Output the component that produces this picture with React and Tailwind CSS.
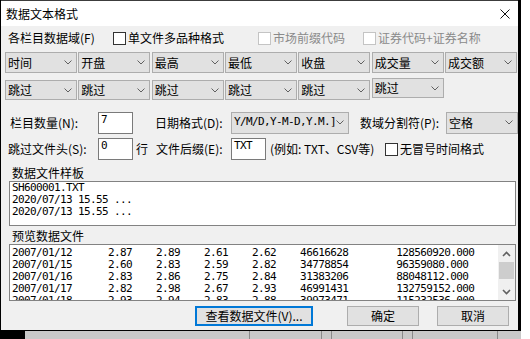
import React from "react";

const mono = "font-['DejaVu_Sans_Mono',monospace] text-[11px] tracking-[-0.62px]";

const rows = [
  ["2007/01/12", "2.87", "2.89", "2.61", "2.62", "46616628", "128560920.000"],
  ["2007/01/15", "2.60", "2.83", "2.59", "2.82", "34778854", "96359080.000"],
  ["2007/01/16", "2.83", "2.86", "2.75", "2.84", "31383206", "88048112.000"],
  ["2007/01/17", "2.82", "2.98", "2.67", "2.93", "46991431", "132759152.000"],
  ["2007/01/18", "2.93", "2.94", "2.83", "2.88", "39973471", "115232536.000"],
];

const fmt = (r) =>
  r[0].padEnd(16) +
  r.slice(1, 5).map((v) => v.padEnd(8)).join("") +
  r[5].padEnd(16) +
  r[6];

const Chevron = () => (
  <svg width="8" height="5" viewBox="0 0 8 5" className="shrink-0">
    <path d="M0.5 0.5 L4 4 L7.5 0.5" stroke="#606060" fill="none" strokeWidth="1" />
  </svg>
);

const Combo = ({ label, className = "w-[72px] h-[21px]", mono: isMono }) => (
  <div
    className={`${className} flex items-center justify-between border border-[#adadad] bg-[#e1e1e1] pl-[2px] pr-[4px] overflow-hidden`}
  >
    <span className={`whitespace-nowrap ${isMono ? mono : "leading-[16px]"}`}>{label}</span>
    <Chevron />
  </div>
);

const Checkbox = ({ label, disabled }) => (
  <div className="flex items-center">
    <div
      className={`w-[13px] h-[13px] bg-white border ${
        disabled ? "border-[#c4c4c4]" : "border-[#333333]"
      }`}
    />
    <span className={`ml-[2px] leading-[16px] ${disabled ? "text-[#8a8a8a]" : ""}`}>{label}</span>
  </div>
);

const Edit = ({ value, className = "w-[35px]" }) => (
  <div className={`${className} h-[22px] bg-white border border-[#7a7a7a] pl-[2px] pt-[1px]`}>
    <span className={`${mono} leading-[12px] block`}>{value}</span>
  </div>
);

const Button = ({ children, className, focused }) => (
  <div
    className={`${className} h-[20px] flex items-center justify-center bg-[#e1e1e1] ${
      focused ? "border-2 border-[#0078d7]" : "border border-[#adadad]"
    }`}
  >
    {children}
  </div>
);

const App = () => {
  const top = ["时间", "开盘", "最高", "最低", "收盘", "成交量", "成交额"];

  return (
    <div className="w-[530px] h-[339px] bg-white flex overflow-hidden font-['Noto_Sans_CJK_SC',sans-serif] text-[12px] text-black">
      <div className="w-[521px] flex flex-col">
        <div className="h-[331px] flex flex-col border-l border-r-[3px] border-b border-black bg-[#f0f0f0]">
          {/* title bar */}
          <div className="h-[26px] bg-white border-t border-[#3c3c3c] flex items-center justify-between pl-[5px] pr-[8px]">
            <span className="leading-[16px]">数据文本格式</span>
            <svg width="10" height="10" viewBox="0 0 10 10">
              <path d="M0.5 0.5 L9.5 9.5 M9.5 0.5 L0.5 9.5" stroke="#111" strokeWidth="1" />
            </svg>
          </div>

          {/* row 1 */}
          <div className="h-[18px] mt-[3px] flex items-center pl-[7px]">
            <span className="w-[105px] leading-[16px]">各栏目数据域(F)</span>
            <div className="w-[145px]">
              <Checkbox label="单文件多品种格式" />
            </div>
            <div className="w-[105px]">
              <Checkbox label="市场前缀代码" disabled />
            </div>
            <Checkbox label="证券代码+证券名称" disabled />
          </div>

          {/* row 2 */}
          <div className="mt-[5px] flex gap-[1.33px] pl-[4px]">
            {top.map((t) => (
              <Combo key={t} label={t} />
            ))}
          </div>

          {/* row 3 */}
          <div className="mt-[5px] h-[22px] flex items-start gap-[1.33px] pl-[4px]">
            {[0, 1, 2, 3, 4].map((i) => (
              <Combo key={i} label="跳过" className="w-[72px] h-[20px] mt-[2px]" />
            ))}
            <Combo label="跳过" className="w-[72px] h-[20px]" />
          </div>

          {/* row 4 */}
          <div className="mt-[11px] h-[23px] flex items-center pl-[9px]">
            <span className="w-[88px] leading-[16px]">栏目数量(N):</span>
            <Edit value="7" />
            <span className="ml-[22px] w-[76px] leading-[16px]">日期格式(D):</span>
            <Combo label="Y/M/D,Y-M-D,Y.M.]" className="w-[118px] h-[22px]" mono />
            <span className="ml-[11px] w-[86px] leading-[16px]">数域分割符(P):</span>
            <Combo label="空格" className="w-[72px] h-[22px]" />
          </div>

          {/* row 5 */}
          <div className="mt-[4px] h-[22px] flex items-center pl-[7px]">
            <span className="w-[90px] leading-[16px]">跳过文件头(S):</span>
            <Edit value="0" />
            <span className="ml-[3px] leading-[16px]">行</span>
            <span className="ml-[8px] w-[75px] leading-[16px]">文件后缀(E):</span>
            <Edit value="TXT" />
            <span className="ml-[4px] w-[115px] leading-[16px]">(例如: TXT、CSV等)</span>
            <Checkbox label="无冒号时间格式" />
          </div>

          {/* template */}
          <div className="mt-[5px] h-[16px] pl-[11px] leading-[16px]">数据文件样板</div>
          <div className={`ml-[8px] w-[507px] h-[45px] bg-white border border-[#828282] pl-[2px] whitespace-pre leading-[12px] ${mono}`}>
            <div>SH600001.TXT</div>
            <div>2020/07/13 15.55 ...</div>
            <div>2020/07/13 15.55 ...</div>
          </div>

          {/* preview */}
          <div className="mt-[2px] h-[16px] pl-[11px] leading-[16px]">预览数据文件</div>
          <div className="ml-[8px] w-[507px] h-[57px] bg-white border border-[#828282] flex">
            <div className={`flex-1 overflow-hidden pl-[2px] pt-[2px] whitespace-pre leading-[12px] ${mono}`}>
              {rows.map((r) => (
                <div key={r[0]}>{fmt(r)}</div>
              ))}
            </div>
            <div className="w-[17px] bg-[#f0f0f0] flex flex-col">
              <div className="h-[17px] flex items-center justify-center">
                <svg width="9" height="6" viewBox="0 0 9 6">
                  <path d="M1 5 L4.5 1.5 L8 5" stroke="#606060" fill="none" strokeWidth="1.6" />
                </svg>
              </div>
              <div className="h-[17px] mx-[1px] bg-[#cdcdcd]" />
              <div className="flex-1" />
              <div className="h-[17px] flex items-center justify-center">
                <svg width="9" height="6" viewBox="0 0 9 6">
                  <path d="M1 1 L4.5 4.5 L8 1" stroke="#606060" fill="none" strokeWidth="1.6" />
                </svg>
              </div>
            </div>
          </div>

          {/* buttons */}
          <div className="mt-[5px] flex pl-[194px]">
            <Button className="w-[118px]" focused>
              <span className="leading-[16px]">查看数据文件(V)...</span>
            </Button>
            <Button className="w-[72px] ml-[34px]">
              <span className="leading-[16px]">确定</span>
            </Button>
            <Button className="w-[72px] ml-[18px]">
              <span className="leading-[16px]">取消</span>
            </Button>
          </div>
        </div>

        {/* window behind */}
        <div className="h-[8px] flex bg-[#c8c8c8]">
          <div className="w-[25px] bg-black" />
          <div className="w-[225px] border-r border-[#8a8a8a]" />
          <div className="w-[72px] border-r border-[#8a8a8a]" />
          <div className="w-[10px] border-r border-[#8a8a8a]" />
          <div className="w-[71px] border-r border-[#8a8a8a]" />
          <div className="w-[10px] border-r border-[#8a8a8a]" />
          <div className="w-[85px] border-r border-[#8a8a8a]" />
        </div>
      </div>
      <div className="flex-1 bg-white" />
    </div>
  );
};

export default App;
